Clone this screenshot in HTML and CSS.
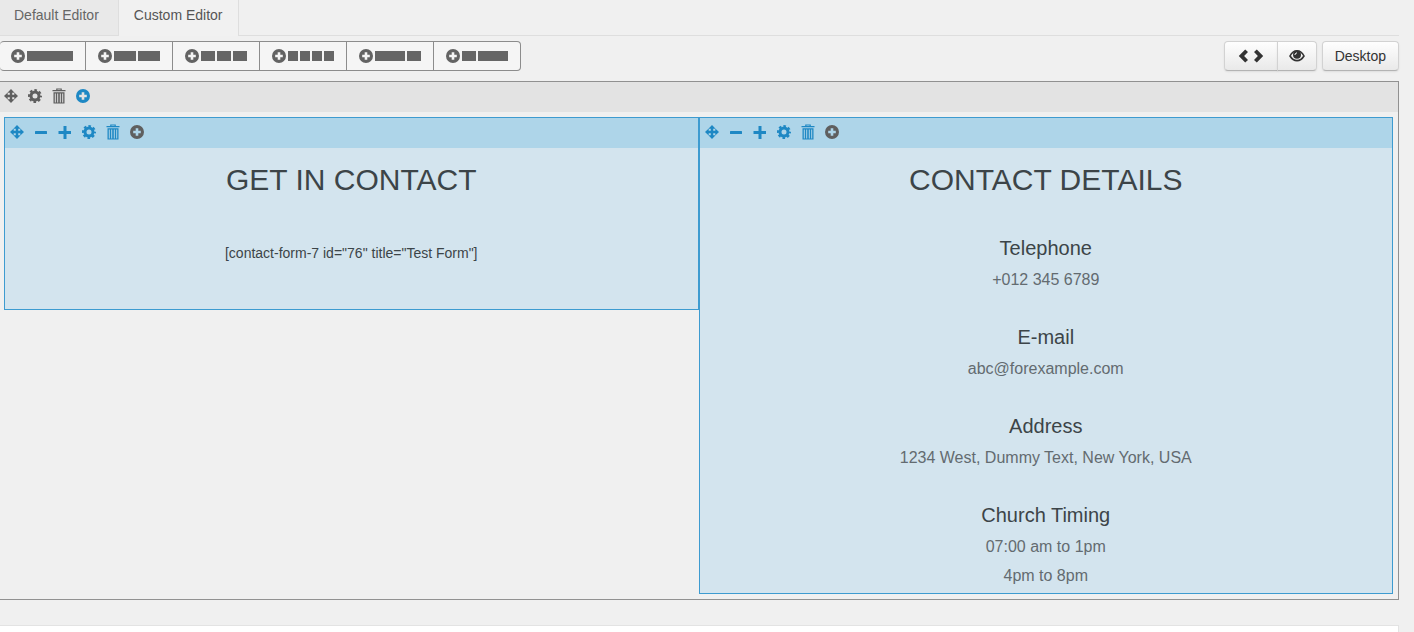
FILE: index.html
```html
<!DOCTYPE html>
<html lang="en">
<head>
    <meta charset="UTF-8">
    <meta name="viewport" content="width=device-width, initial-scale=1.0">
    <title>Custom Editor</title>
    <link rel="stylesheet" href="styles.css">
</head>
<body>

    <!-- Icon set -->
    <svg class="icon-set" aria-hidden="true">
        <symbol id="move" viewBox="0 0 14 14">
            <path d="M7 0L10.6 3.7H8.2V5.8H10.3V3.4L14 7L10.3 10.6V8.2H8.2V10.3H10.6L7 14L3.4 10.3H5.8V8.2H3.7V10.6L0 7L3.7 3.4V5.8H5.8V3.7H3.4Z"/>
        </symbol>
        <symbol id="minus" viewBox="0 0 14 14">
            <rect x="1" y="6" width="12" height="3" rx="0.5"/>
        </symbol>
        <symbol id="plus" viewBox="0 0 14 14">
            <path d="M5.5 1H8.5V6H13V9H8.5V14H5.5V9H0.5V6H5.5Z"/>
        </symbol>
        <symbol id="cog" viewBox="0 0 14 14">
            <circle cx="7" cy="7" r="4" fill="none" stroke="currentColor" stroke-width="3"/>
            <circle cx="7" cy="7" r="6" fill="none" stroke="currentColor" stroke-width="2" stroke-dasharray="2.6 2.112" stroke-dashoffset="1.3"/>
        </symbol>
        <symbol id="trash" viewBox="0 0 14 16">
            <path d="M4.2 2V0.5H9.8V2H13.5V3.3H0.5V2ZM5.4 1.4V2H8.6V1.4Z" fill-rule="evenodd"/>
            <path d="M1.5 4.3H12.5V15.5H1.5ZM2.8 5.6V14.5H3.8V5.6ZM5.2 5.6V14.5H6.2V5.6ZM7.8 5.6V14.5H8.8V5.6ZM10.2 5.6V14.5H11.2V5.6Z" fill-rule="evenodd"/>
        </symbol>
        <symbol id="add" viewBox="0 0 14 14">
            <path d="M7 0A7 7 0 1 0 7 14A7 7 0 1 0 7 0ZM5.7 3.2H8.3V5.7H10.8V8.3H8.3V10.8H5.7V8.3H3.2V5.7H5.7Z" fill-rule="evenodd"/>
        </symbol>
        <symbol id="code" viewBox="0 0 26 14">
            <path d="M7.2 0.5L10 3.1L6.1 7L10 10.9L7.2 13.5L0.8 7Z"/>
            <path d="M18.8 0.5L16 3.1L19.9 7L16 10.9L18.8 13.5L25.2 7Z"/>
        </symbol>
        <symbol id="eye" viewBox="0 0 16 14">
            <path d="M1 7C3 2.9 5.5 1.7 8 1.7S13 2.9 15 7C13 10.3 10.6 11.6 8 11.6S3 10.3 1 7Z" fill="none" stroke="currentColor" stroke-width="1.6"/>
            <circle cx="8" cy="5.8" r="4"/>
            <path d="M5.9 6Q6 4.1 8 3.8" fill="none" stroke="#fff" stroke-width="1"/>
        </symbol>
    </svg>

    <div class="editor">
        <nav class="tabs">
            <a class="tab" href="#default">Default Editor</a>
            <a class="tab active" href="#custom">Custom Editor</a>
        </nav>

        <div class="toolbar">
            <div class="layouts">
                <button class="layout" aria-label="1 column"><svg class="icon"><use href="#add"/></svg><span class="bars bars-1"><i></i></span></button>
                <button class="layout" aria-label="2 columns"><svg class="icon"><use href="#add"/></svg><span class="bars bars-2"><i></i><i></i></span></button>
                <button class="layout" aria-label="3 columns"><svg class="icon"><use href="#add"/></svg><span class="bars bars-3"><i></i><i></i><i></i></span></button>
                <button class="layout" aria-label="4 columns"><svg class="icon"><use href="#add"/></svg><span class="bars bars-4"><i></i><i></i><i></i><i></i></span></button>
                <button class="layout" aria-label="Wide and narrow"><svg class="icon"><use href="#add"/></svg><span class="bars bars-wide-left"><i></i><i></i></span></button>
                <button class="layout" aria-label="Narrow and wide"><svg class="icon"><use href="#add"/></svg><span class="bars bars-wide-right"><i></i><i></i></span></button>
            </div>
            <div class="views">
                <div class="btn-group">
                    <button class="btn" aria-label="Source"><svg class="icon icon-code"><use href="#code"/></svg></button>
                    <button class="btn" aria-label="Preview"><svg class="icon icon-eye"><use href="#eye"/></svg></button>
                </div>
                <button class="btn">Desktop</button>
            </div>
        </div>

        <div class="row">
            <div class="tools">
                <button class="tool" aria-label="Move row"><svg class="icon"><use href="#move"/></svg></button>
                <button class="tool" aria-label="Row settings"><svg class="icon"><use href="#cog"/></svg></button>
                <button class="tool" aria-label="Delete row"><svg class="icon icon-trash"><use href="#trash"/></svg></button>
                <button class="tool blue" aria-label="Add column"><svg class="icon"><use href="#add"/></svg></button>
            </div>

            <div class="columns">
                <section class="column column-form">
                    <div class="tools column-tools">
                        <button class="tool" aria-label="Move column"><svg class="icon"><use href="#move"/></svg></button>
                        <button class="tool" aria-label="Narrower"><svg class="icon"><use href="#minus"/></svg></button>
                        <button class="tool" aria-label="Wider"><svg class="icon"><use href="#plus"/></svg></button>
                        <button class="tool" aria-label="Column settings"><svg class="icon"><use href="#cog"/></svg></button>
                        <button class="tool" aria-label="Delete column"><svg class="icon icon-trash"><use href="#trash"/></svg></button>
                        <button class="tool gray" aria-label="Add element"><svg class="icon"><use href="#add"/></svg></button>
                    </div>
                    <h2>GET IN CONTACT</h2>
                    <p class="shortcode">[contact-form-7 id="76" title="Test Form"]</p>
                </section>

                <section class="column column-details">
                    <div class="tools column-tools">
                        <button class="tool" aria-label="Move column"><svg class="icon"><use href="#move"/></svg></button>
                        <button class="tool" aria-label="Narrower"><svg class="icon"><use href="#minus"/></svg></button>
                        <button class="tool" aria-label="Wider"><svg class="icon"><use href="#plus"/></svg></button>
                        <button class="tool" aria-label="Column settings"><svg class="icon"><use href="#cog"/></svg></button>
                        <button class="tool" aria-label="Delete column"><svg class="icon icon-trash"><use href="#trash"/></svg></button>
                        <button class="tool gray" aria-label="Add element"><svg class="icon"><use href="#add"/></svg></button>
                    </div>
                    <h2>CONTACT DETAILS</h2>
                    <div class="detail">
                        <h3>Telephone</h3>
                        <p>+012 345 6789</p>
                    </div>
                    <div class="detail">
                        <h3>E-mail</h3>
                        <p>abc@forexample.com</p>
                    </div>
                    <div class="detail">
                        <h3>Address</h3>
                        <p>1234 West, Dummy Text, New York, USA</p>
                    </div>
                    <div class="detail">
                        <h3>Church Timing</h3>
                        <p>07:00 am to 1pm</p>
                        <p>4pm to 8pm</p>
                    </div>
                </section>
            </div>
        </div>

        <div class="panel"></div>
    </div>

</body>
</html>
```
FILE: styles.css
```css
* {
    box-sizing: border-box;
}

body {
    margin: 0;
    background: #f0f0f0;
    color: #3c4448;
    font-family: "Liberation Sans", Arial, sans-serif;
    font-size: 14px;
    line-height: 20px;
}

button {
    margin: 0;
    padding: 0;
    font: inherit;
    color: inherit;
    cursor: pointer;
}

h2,
h3,
p {
    margin: 0;
    font-weight: normal;
    text-align: center;
}

.icon-set {
    display: none;
}

.icon {
    display: block;
    flex: none;
    width: 14px;
    height: 14px;
    fill: currentColor;
}

.icon-trash {
    height: 16px;
}

.icon-code {
    width: 26px;
}

.icon-eye {
    width: 16px;
}

.editor {
    display: flex;
    flex-direction: column;
    min-height: 100vh;
    margin-right: 15px;
}

/* Tabs */
.tabs {
    display: flex;
    border-bottom: 1px solid #dedede;
}

.tab {
    padding: 5px 19px 10px 14px;
    border-right: 1px solid #dedede;
    background: #e9e9e9;
    color: #666;
    text-decoration: none;
}

.tab.active {
    margin-bottom: -1px;
    padding: 5px 15px 11px;
    background: #f1f1f1;
    color: #555;
}

/* Toolbar */
.toolbar {
    display: flex;
    justify-content: space-between;
    padding: 5px 0 10px;
}

.layouts {
    display: flex;
    border: 1px solid #8c8c8c;
    border-left: 0;
    border-radius: 4px;
    background: #f5f5f5;
}

.layout {
    display: flex;
    align-items: center;
    gap: 2px;
    height: 28px;
    padding: 0 12px;
    border: 0;
    border-right: 1px solid #8c8c8c;
    background: none;
    color: #636363;
}

.layout:first-child {
    padding-left: 11px;
}

.layout:last-child {
    border-right: 0;
}

.bars {
    display: grid;
    gap: 2px;
    width: 46px;
    height: 10px;
}

.bars i {
    background: #666;
}

.bars-2 {
    grid-template-columns: 1fr 1fr;
}

.bars-3 {
    grid-template-columns: repeat(3, 1fr);
}

.bars-4 {
    grid-template-columns: repeat(4, 1fr);
}

.bars-wide-left {
    grid-template-columns: 30px 14px;
}

.bars-wide-right {
    grid-template-columns: 14px 30px;
}

.views {
    display: flex;
    gap: 5px;
}

.btn-group {
    display: flex;
}

.btn {
    display: flex;
    align-items: center;
    height: 30px;
    padding: 0 12px;
    border: 1px solid #d2d2d2;
    border-bottom-color: #b3b3b3;
    border-radius: 4px;
    background: linear-gradient(#fefefe, #e9e9e9);
    box-shadow: 0 1px 2px rgba(0, 0, 0, 0.08);
    color: #333;
}

.btn-group .btn:first-child {
    padding: 0 13px;
    border-radius: 4px 0 0 4px;
}

.btn-group .btn:last-child {
    margin-left: -1px;
    padding: 0 11px;
    border-radius: 0 4px 4px 0;
}

/* Row being edited */
.row {
    border: 1px solid #919191;
    border-left: 0;
}

.tools {
    display: flex;
    align-items: center;
    gap: 10px;
    height: 30px;
    padding: 0 4px 2px;
    background: #e3e3e3;
}

.tool {
    border: 0;
    background: none;
    color: #5f5f5f;
}

.columns {
    display: grid;
    grid-template-columns: 1fr 1fr;
    align-items: start;
    padding: 5px 5px 5px 4px;
}

.column {
    border: 1px solid #3d9bd0;
    background: #d3e4ee;
}

.column-tools {
    padding: 0 5px 2px;
    background: #aed5e9;
}

.column-tools .tool,
.tool.blue {
    color: #1e88c4;
}

.column-tools .tool.gray {
    color: #5f5f5f;
}

.column h2 {
    margin: 12px 0 36px;
    font-size: 30px;
    line-height: 40px;
}

.column-form {
    padding-bottom: 46px;
}

.column-form h2 {
    margin-bottom: 43px;
}

.column-details {
    padding-bottom: 3px;
}

.detail + .detail {
    margin-top: 31px;
}

.detail h3 {
    margin-bottom: 5px;
    font-size: 20px;
    line-height: 24px;
}

.detail p {
    color: #636b70;
    font-size: 16px;
    line-height: 29px;
}

/* Next panel under the editor */
.panel {
    flex: 1;
    margin-top: 25px;
    border: 1px solid #e3e3e3;
    border-width: 1px 1px 0 0;
    background: #fff;
}
```
